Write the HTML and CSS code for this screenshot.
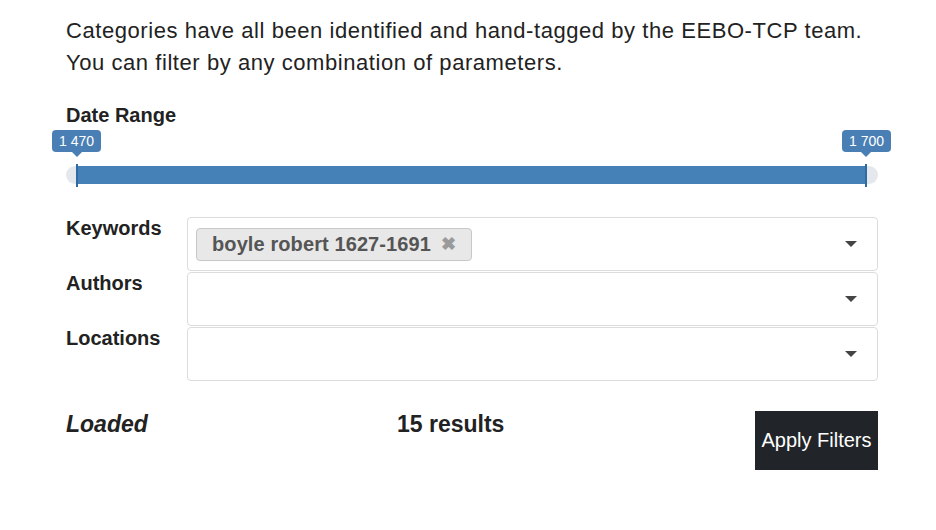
FILE: index.html
```html
<!DOCTYPE html>
<html>
<head>
<meta charset="utf-8">
<link rel="stylesheet" href="styles.css">
</head>
<body>
<div class="panel">
  <p class="intro">Categories have all been identified and hand-tagged by the EEBO-TCP team. You can filter by any combination of parameters.</p>

  <div class="range">
    <div class="range-title">Date Range</div>
    <div class="tips">
      <span class="tip">1 470</span>
      <span class="tip">1 700</span>
    </div>
    <div class="track">
      <div class="bar">
        <span class="handle"></span>
        <span class="fill"></span>
        <span class="handle"></span>
      </div>
    </div>
  </div>

  <div class="fields">
    <label class="field-label">Keywords</label>
    <div class="select">
      <div class="chips">
        <span class="chip">boyle robert 1627-1691 <span class="chip-x">✖</span></span>
      </div>
      <span class="caret"></span>
    </div>
    <label class="field-label">Authors</label>
    <div class="select">
      <div class="chips"></div>
      <span class="caret"></span>
    </div>
    <label class="field-label">Locations</label>
    <div class="select">
      <div class="chips"></div>
      <span class="caret"></span>
    </div>
  </div>

  <div class="footer">
    <div class="status">Loaded</div>
    <div class="count">15 results</div>
    <button class="apply">Apply Filters</button>
  </div>
</div>
</body>
</html>
```

FILE: styles.css
```css
html, body {
  margin: 0;
  padding: 0;
  background: #fff;
}
body {
  font-family: "Liberation Sans", Arial, sans-serif;
  color: #222;
}
.panel {
  width: 812px;
  margin-left: 66px;
  padding-top: 15px;
}
.intro {
  margin: 0;
  font-size: 22px;
  line-height: 32px;
  color: #222;
  letter-spacing: 0.56px;
}
.range {
  margin-top: 24px;
}
.range-title {
  font-weight: bold;
  font-size: 20px;
  line-height: 24px;
  color: #222;
}
.tips {
  display: flex;
  justify-content: space-between;
  margin-left: -14px;
  margin-right: -13px;
  margin-top: 3px;
  height: 36px;
}
.tip {
  position: relative;
  align-self: flex-start;
  background: #4a7fb5;
  color: #fff;
  font-size: 14px;
  line-height: 22px;
  height: 22px;
  padding: 0 7px;
  border-radius: 4px;
}
.tip::after {
  content: "";
  position: absolute;
  left: 50%;
  bottom: -5px;
  margin-left: -5px;
  border-left: 5px solid transparent;
  border-right: 5px solid transparent;
  border-top: 5px solid #4a7fb5;
}
.track {
  height: 18px;
  background: #e4e7eb;
  border-radius: 9px;
}
.bar {
  display: flex;
  margin: 0 11px 0 10px;
  height: 18px;
  align-items: center;
}
.fill {
  flex: 1;
  height: 18px;
  background: #4580b6;
}
.handle {
  width: 2px;
  height: 23px;
  background: #2f6aa3;
}
.fields {
  margin-top: 33px;
  display: grid;
  grid-template-columns: 121px 1fr;
  row-gap: 1px;
}
.field-label {
  font-weight: bold;
  font-size: 20px;
  line-height: 22px;
  color: #222;
}
.select {
  height: 52px;
  border: 1px solid #dcdcdc;
  border-radius: 4px;
  display: flex;
  align-items: center;
}
.chips {
  flex: 1;
  padding-left: 8px;
  display: flex;
}
.chip {
  display: inline-flex;
  align-items: center;
  height: 31px;
  padding: 0 15px 0 15px;
  background: #e8e8e8;
  border: 1px solid #c8c8c8;
  border-radius: 4px;
  font-weight: bold;
  font-size: 20px;
  color: #555;
  letter-spacing: 0.1px;
}
.chip-x {
  margin-left: 10px;
  font-size: 18px;
  color: #9a9a9a;
}
.caret {
  width: 0;
  height: 0;
  margin-right: 20px;
  border-left: 6px solid transparent;
  border-right: 6px solid transparent;
  border-top: 6px solid #444;
}
.footer {
  margin-top: 30px;
  display: grid;
  grid-template-columns: 331px 1fr auto;
  align-items: start;
}
.status {
  font-weight: bold;
  font-style: italic;
  font-size: 23px;
  line-height: 26px;
  color: #222;
}
.count {
  font-weight: bold;
  font-size: 23px;
  line-height: 26px;
  color: #222;
}
.apply {
  background: #212529;
  color: #fff;
  border: none;
  border-radius: 0;
  font-family: "Liberation Sans", Arial, sans-serif;
  font-size: 20px;
  height: 59px;
  width: 123px;
  padding: 0;
}
```
